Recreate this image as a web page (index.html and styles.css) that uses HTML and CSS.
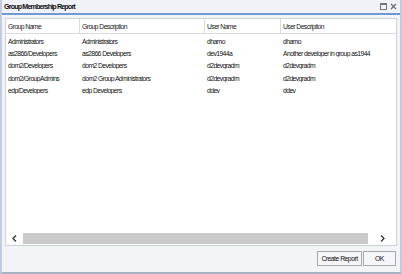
FILE: index.html
```html
<!DOCTYPE html>
<html>
<head>
<meta charset="utf-8">
<link rel="stylesheet" href="styles.css">
</head>
<body>
<div class="window">
  <div class="titlebar">
    <span class="title">Group Membership Report</span>
    <span class="controls">
      <svg class="ico" width="7" height="7" viewBox="0 0 7 7"><rect x="0.5" y="0.5" width="6" height="6" fill="none" stroke="#777" stroke-width="1"/><line x1="0.5" y1="1.5" x2="6.5" y2="1.5" stroke="#777"/></svg>
      <svg class="ico" width="7" height="7" viewBox="0 0 7 7"><path d="M1 1 L6 6 M6 1 L1 6" stroke="#666" stroke-width="1.1"/></svg>
    </span>
  </div>
  <div class="panel">
    <div class="row head">
      <div class="c c1">Group Name</div>
      <div class="c c2">Group Description</div>
      <div class="c c3">User Name</div>
      <div class="c c4">User Description</div>
    </div>
    <div class="body">
      <div class="row"><div class="c c1">Administrators</div><div class="c c2">Administrators</div><div class="c c3">dhamo</div><div class="c c4">dhamo</div></div>
      <div class="row"><div class="c c1">as2866/Developers</div><div class="c c2">as2866 Developers</div><div class="c c3">dev1944a</div><div class="c c4">Another developer in group as1944</div></div>
      <div class="row"><div class="c c1">dom2/Developers</div><div class="c c2">dom2 Developers</div><div class="c c3">d2devgradm</div><div class="c c4">d2devgradm</div></div>
      <div class="row"><div class="c c1">dom2/GroupAdmins</div><div class="c c2">dom2 Group Administrators</div><div class="c c3">d2devgradm</div><div class="c c4">d2devgradm</div></div>
      <div class="row"><div class="c c1">edp/Developers</div><div class="c c2">edp Developers</div><div class="c c3">ddev</div><div class="c c4">ddev</div></div>
    </div>
    <div class="hscroll">
      <div class="arrow left"><svg width="5" height="7" viewBox="0 0 5 7"><path d="M4 0.5 L1 3.5 L4 6.5" fill="none" stroke="#333" stroke-width="1.3"/></svg></div>
      <div class="track"></div>
      <div class="arrow right"><svg width="5" height="7" viewBox="0 0 5 7"><path d="M1 0.5 L4 3.5 L1 6.5" fill="none" stroke="#333" stroke-width="1.3"/></svg></div>
    </div>
  </div>
  <div class="footer">
    <button class="btn create">Create Report</button>
    <button class="btn ok">OK</button>
  </div>
</div>
</body>
</html>
```
FILE: styles.css
```css
html, body {
  margin: 0;
  padding: 0;
  background: #f2f3f7;
}
.window {
  width: 402px;
  height: 274px;
  box-sizing: border-box;
  border-left: 2px solid #c3cbe0;
  border-right: 2px solid #c3cbe0;
  border-bottom: 2px solid #a9b1c4;
  background: #f3f4f8;
  display: flex;
  flex-direction: column;
  font-family: "Liberation Sans", Arial, sans-serif;
  font-size: 6.8px;
  letter-spacing: -0.58px;
  color: #111;
}
.titlebar {
  height: 13px;
  flex: none;
  display: flex;
  align-items: center;
  justify-content: space-between;
  padding: 0 3px 0 2px;
  border-bottom: 2px solid #6f9ad4;
  background: #f1f2f7;
}
.title {
  font-weight: bold;
  font-size: 7.2px;
  letter-spacing: -0.88px;
  color: #111;
}
.controls {
  display: flex;
  gap: 3px;
  align-items: center;
}
.ico { display: block; }
.panel {
  margin: 3px 3px 0 3px;
  height: 228px;
  box-sizing: border-box;
  border: 1px solid #cdd2dc;
  background: #fff;
  display: flex;
  flex-direction: column;
}
.row {
  display: flex;
  height: 12.3px;
  align-items: center;
}
.head {
  height: 14px;
  border-bottom: 1px solid #dadada;
  color: #222;
}
.head .c { border-right: 1px solid #dcdcdc; height: 100%; display: flex; align-items: center; }
.head .c4 { border-right: none; }
.c {
  box-sizing: border-box;
  padding-left: 2px;
  white-space: nowrap;
  overflow: hidden;
}
.c1 { width: 74px; }
.c2 { width: 125px; }
.c3 { width: 76px; }
.c4 { flex: 1; }
.body {
  flex: 1;
  padding-top: 1px;
}
.hscroll {
  height: 11px;
  display: flex;
  margin-bottom: 1px;
}
.arrow {
  display: flex;
  align-items: center;
  justify-content: center;
  background: #fff;
}
.arrow.left { width: 17px; }
.arrow.right { width: 28px; }
.track {
  flex: 1;
  background: #cacaca;
}
.footer {
  flex: 1;
  display: flex;
  justify-content: flex-end;
  align-items: flex-start;
  padding: 5px 4px 0 0;
}
.btn {
  font-family: inherit;
  font-size: 6.8px;
  letter-spacing: -0.5px;
  white-space: nowrap;
  color: #111;
  height: 15px;
  padding: 0;
  margin: 0;
  background: #f6f6f8;
  border: 1px solid #a6a8ae;
  border-radius: 0;
}
.create { width: 45px; }
.ok { width: 33px; margin-left: 1px; }
```
